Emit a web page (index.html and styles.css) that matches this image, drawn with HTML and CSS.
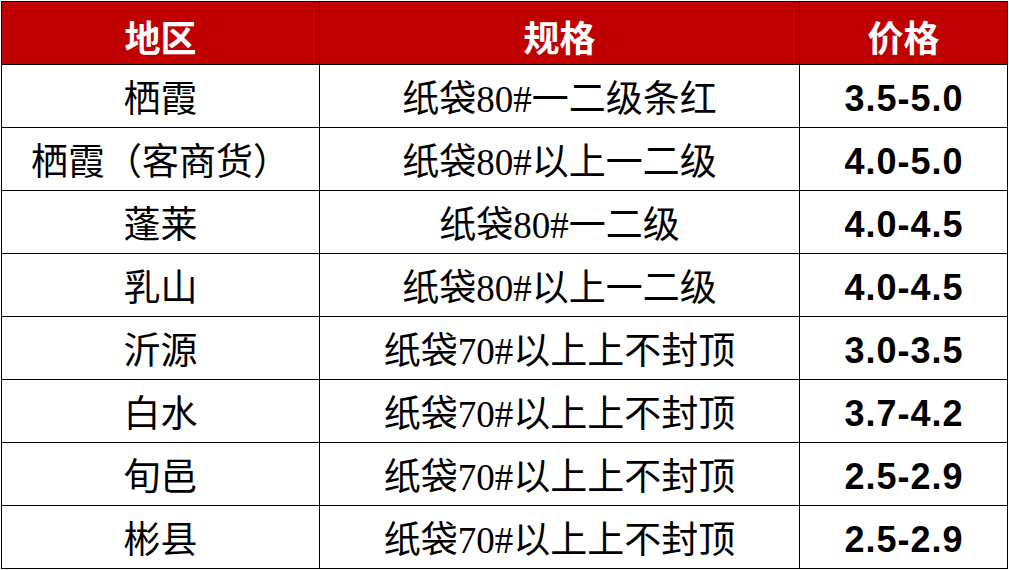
FILE: index.html
```html
<!DOCTYPE html>
<html lang="zh">
<head>
<meta charset="utf-8">
<link rel="stylesheet" href="styles.css">
</head>
<body>
<div class="wrap">
<table class="price-table">
  <colgroup>
    <col class="c-region">
    <col class="c-spec">
    <col class="c-price">
  </colgroup>
  <thead>
    <tr><th>地区</th><th>规格</th><th>价格</th></tr>
  </thead>
  <tbody>
    <tr><td>栖霞</td><td>纸袋80#一二级条红</td><td class="num">3.5-5.0</td></tr>
    <tr><td>栖霞（客商货）</td><td>纸袋80#以上一二级</td><td class="num">4.0-5.0</td></tr>
    <tr><td>蓬莱</td><td>纸袋80#一二级</td><td class="num">4.0-4.5</td></tr>
    <tr><td>乳山</td><td>纸袋80#以上一二级</td><td class="num">4.0-4.5</td></tr>
    <tr><td>沂源</td><td>纸袋70#以上上不封顶</td><td class="num">3.0-3.5</td></tr>
    <tr><td>白水</td><td>纸袋70#以上上不封顶</td><td class="num">3.7-4.2</td></tr>
    <tr><td>旬邑</td><td>纸袋70#以上上不封顶</td><td class="num">2.5-2.9</td></tr>
    <tr><td>彬县</td><td>纸袋70#以上上不封顶</td><td class="num">2.5-2.9</td></tr>
  </tbody>
</table>
</div>
</body>
</html>
```
FILE: styles.css
```css
html, body {
  margin: 0;
  padding: 0;
  background: #ffffff;
}
.wrap {
  padding: 1px 0 0 1px;
}
.price-table {
  border-collapse: collapse;
  table-layout: fixed;
  width: 1006px;
}
.c-region { width: 318px; }
.c-spec { width: 480px; }
.c-price { width: 208px; }
.price-table th,
.price-table td {
  border: 1px solid #000;
  height: 56px;
  padding: 6px 0 0 0;
  text-align: center;
  vertical-align: middle;
  white-space: nowrap;
  line-height: 1;
}
.price-table th {
  background: #c00000;
  color: #ffffff;
  font-family: "Noto Sans CJK SC", sans-serif;
  font-weight: 700;
  font-size: 36px;
}
.price-table td {
  color: #000;
  font-family: "Liberation Serif", "Noto Sans CJK SC", serif;
  font-weight: 400;
  font-size: 37px;
}
.price-table td.num {
  font-family: "Liberation Sans", Arial, sans-serif;
  font-weight: 700;
  font-size: 36px;
  letter-spacing: 1px;
  padding-left: 1px;
}
```
